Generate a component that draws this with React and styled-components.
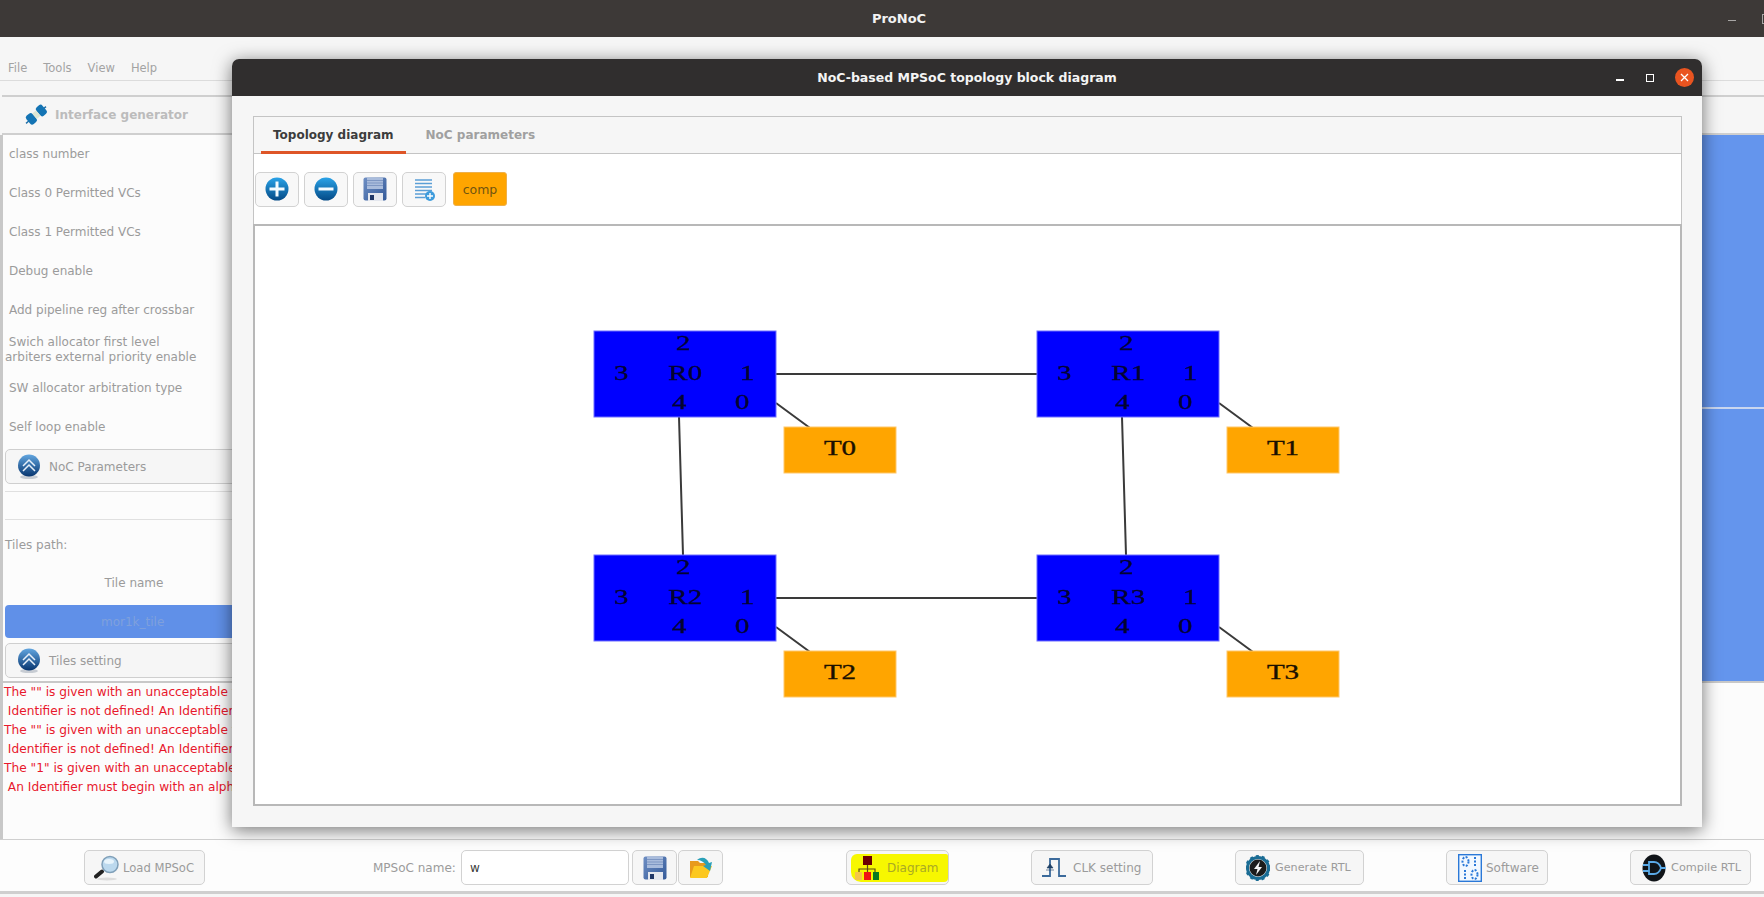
import React from "react";
import styled, { createGlobalStyle } from "styled-components";

const GlobalStyle = createGlobalStyle`
    html, body {
        margin: 0;
        padding: 0;
        height: 100%;
        overflow: hidden;
        background: #f6f6f6;
    }
    * {
        box-sizing: border-box;
    }
`

const Screen = styled.div`
    position: relative;
    width: 1764px;
    height: 897px;
    display: flex;
    flex-direction: column;
    overflow: hidden;
    background: #f6f6f6;
    font-family: "DejaVu Sans", sans-serif;
    font-size: 12px;
    color: #9b9b9b;
`

const TitleBar = styled.div`
    position: relative;
    height: 37px;
    flex: none;
    display: flex;
    align-items: center;
    justify-content: center;
    padding-left: 34px;
    background: #3d3937;
    color: #f2f2f2;
    font-weight: bold;
    font-size: 13px;
`

const MainControls = styled.div`
    position: absolute;
    top: 14px;
    left: 1728px;
    display: flex;
    align-items: center;
    gap: 26px;
`

const MainMinimize = styled.span`
    width: 8px;
    height: 1px;
    margin-top: 2px;
    background: #a8a6a5;
`

const MainMaximize = styled.span`
    width: 10px;
    height: 10px;
    border: 1px solid #a8a6a5;
`

const MenuBar = styled.div`
    height: 44px;
    flex: none;
    display: flex;
    align-items: flex-end;
    gap: 16px;
    padding: 0 0 5px 8px;
    border-bottom: 1px solid #dcdcdc;
    font-size: 11.5px;
    color: #a3a3a3;
`

const TabStrip = styled.div`
    height: 40px;
    flex: none;
    margin: 14px 0 0 2px;
    display: flex;
    align-items: center;
    padding-left: 22px;
    gap: 7px;
    border-top: 2px solid #cfcfcf;
    border-bottom: 2px solid #cfcfcf;
    font-weight: bold;
    font-size: 12px;
    color: #bcbcbc;
`

const NextTabEdge = styled.span`
    margin-left: 41px;
    width: 3px;
    height: 8px;
    background: repeating-linear-gradient(#555 0 1px, transparent 1px 3px);
`

const Upper = styled.div`
    height: 548px;
    flex: none;
    display: flex;
    border-left: 3px solid #c8c8c8;
    border-bottom: 2px solid #c8c8c8;
    background: #fcfcfc;
`

const LeftColumn = styled.div`
    width: 500px;
    flex: none;
    display: flex;
    flex-direction: column;
    padding: 0 0 0 2px;
`

const ParamRow = styled.div`
    height: 39px;
    flex: none;
    display: flex;
    align-items: center;
    padding-left: ${(p) => (p.$flush ? 0 : 4)}px;
    line-height: 15px;
    white-space: pre;
`

const Collapse = styled.div`
    height: 35px;
    flex: none;
    margin-top: ${(p) => p.$top || 0}px;
    display: flex;
    align-items: center;
    gap: 8px;
    padding-left: 11px;
    background: #f6f6f6;
    border: 1px solid #cfcfcf;
    border-radius: 5px;
`

const Divider = styled.div`
    height: 1px;
    flex: none;
    margin-top: ${(p) => p.$top}px;
    background: #e0e0e0;
`

const PathRow = styled.div`
    height: 20px;
    flex: none;
    margin-top: 15px;
    display: flex;
    align-items: center;
`

const TileHead = styled.div`
    height: 20px;
    width: 258px;
    flex: none;
    margin-top: 18px;
    display: flex;
    align-items: center;
    justify-content: center;
`

const TileBar = styled.div`
    height: 33px;
    flex: none;
    margin: 12px 0 5px 0;
    display: flex;
    align-items: center;
    padding-left: 96px;
    border-radius: 4px;
    background: #6090e8;
    color: #7fa0dc;
`

const RightColumn = styled.div`
    flex: 1;
    display: flex;
    flex-direction: column;
`

const BluePane = styled.div`
    flex: ${(p) => (p.$tall ? 1 : "none")};
    height: ${(p) => (p.$tall ? "auto" : "272px")};
    background: #6495ed;
`

const PaneSplit = styled.div`
    height: 2px;
    flex: none;
    background: #c9d6ef;
`

const ErrorLog = styled.div`
    flex: 1;
    min-height: 0;
    padding: 0 0 0 1px;
    border-left: 3px solid #c8c8c8;
    background: #fcfcfc;
    color: #e8182c;
    font-size: 12.2px;
    line-height: 19px;
    white-space: pre;
`

const BottomBar = styled.div`
    height: 55px;
    flex: none;
    margin-bottom: 3px;
    display: flex;
    align-items: center;
    padding-top: 4px;
    background: #fdfdfd;
    border-top: 1px solid #cfcfcf;
    border-bottom: 3px solid #cfcfcf;
`

const BarButton = styled.div`
    width: ${(p) => p.$width}px;
    height: 35px;
    flex: none;
    margin-left: ${(p) => p.$left || 0}px;
    display: flex;
    align-items: center;
    justify-content: ${(p) => (p.$center ? "center" : "flex-start")};
    gap: ${(p) => (p.$gap === undefined ? 5 : p.$gap)}px;
    padding-left: ${(p) => (p.$center ? 0 : p.$pad || 7)}px;
    background: #f6f6f6;
    border: 1px solid #d2d2d2;
    border-radius: 5px;
    white-space: nowrap;
    font-size: ${(p) => p.$size || 12}px;
`

const Highlight = styled.div`
    flex: 1;
    height: 28px;
    margin: 0 0 0 3px;
    display: flex;
    align-items: center;
    gap: 8px;
    padding-left: 4px;
    background: #f7f700;
    border-radius: 6px 2px 4px 10px;
    color: #a9a925;
`

const NameLabel = styled.span`
    width: 88px;
    flex: none;
    margin-left: 168px;
`

const NameInput = styled.div`
    width: 168px;
    height: 35px;
    flex: none;
    margin-right: 3px;
    display: flex;
    align-items: center;
    padding-left: 8px;
    background: #fff;
    border: 1px solid #d2d2d2;
    border-radius: 5px;
    color: #3c3c3c;
`

const Dialog = styled.div`
    position: absolute;
    left: 232px;
    top: 59px;
    width: 1470px;
    height: 768px;
    display: flex;
    flex-direction: column;
    background: #f6f6f6;
    border-radius: 7px 7px 0 0;
    box-shadow: 0 3px 18px rgba(0, 0, 0, 0.55);
`

const DialogTitle = styled.div`
    position: relative;
    height: 37px;
    flex: none;
    display: flex;
    align-items: center;
    justify-content: center;
    background: #302e2e;
    border-radius: 7px 7px 0 0;
    color: #f4f4f4;
    font-weight: bold;
    font-size: 12.5px;
`

const DialogControls = styled.div`
    position: absolute;
    right: 8px;
    top: 0;
    height: 100%;
    display: flex;
    align-items: center;
`

const DialogMinimize = styled.span`
    width: 8px;
    height: 2px;
    margin: 4px 22px 0 0;
    background: #fff;
`

const DialogMaximize = styled.span`
    width: 8px;
    height: 8px;
    margin-right: 21px;
    border: 1px solid #fff;
`

const DialogClose = styled.span`
    width: 19px;
    height: 19px;
    display: flex;
    align-items: center;
    justify-content: center;
    border-radius: 50%;
    background: #e95420;
`

const DialogBody = styled.div`
    flex: 1;
    min-height: 0;
    display: flex;
    padding: 20px 20px 21px 21px;
`

const Notebook = styled.div`
    flex: 1;
    display: flex;
    flex-direction: column;
    border-top: 1px solid #c4c4c4;
    border-left: 1px solid #c4c4c4;
    border-right: 1px solid #c4c4c4;
    background: #fff;
`

const NotebookTabs = styled.div`
    height: 37px;
    flex: none;
    display: flex;
    padding-left: 7px;
    background: #f6f6f6;
    border-bottom: 1px solid #c4c4c4;
`

const NotebookTab = styled.div`
    height: 37px;
    display: flex;
    align-items: center;
    padding: 0 12px;
    margin-right: 8px;
    font-weight: bold;
    font-size: 12px;
    color: ${(p) => (p.$active ? "#3c3c3c" : "#a0a0a0")};
    border-bottom: ${(p) => (p.$active ? "3px solid #de5527" : "3px solid transparent")};
    padding-top: 1px;
`

const ToolRow = styled.div`
    height: 70px;
    flex: none;
    display: flex;
    align-items: center;
    gap: 5px;
    padding: 0 0 0 1px;
`

const ToolButton = styled.div`
    width: 44px;
    height: 35px;
    display: flex;
    align-items: center;
    justify-content: center;
    background: #f8f8f8;
    border: 1px solid #d2d2d2;
    border-radius: 5px;
`

const CompButton = styled.div`
    width: 54px;
    height: 34px;
    margin-left: 2px;
    display: flex;
    align-items: center;
    justify-content: center;
    background: #ffa500;
    border: 1px solid #eeb04a;
    border-radius: 3px;
    color: #6f5410;
    font-size: 12.5px;
`

const Canvas = styled.div`
    flex: 1;
    min-height: 0;
    margin: 0 -1px 0 -1px;
    border: 2px solid #b8b8b8;
    background: #fff;
`

const DiagramSvg = styled.svg`
    display: block;
    width: 100%;
    height: 100%;
    font-family: "Liberation Serif", serif;
    font-size: 20px;
`

const Blur = styled.g`
    filter: blur(0.4px);
`

function PlusIcon() {
    return (
        <svg width="24" height="24" viewBox="0 0 24 24">
            <defs>
                <linearGradient id="plusFill" x1="0" y1="0" x2="0" y2="1">
                    <stop offset="0" stopColor="#2aa3e8" />
                    <stop offset="1" stopColor="#044a86" />
                </linearGradient>
            </defs>
            <circle cx="12" cy="12" r="11.5" fill="url(#plusFill)" />
            <path d="M12 4.5v15M4.5 12h15" stroke="#f4fbff" strokeWidth="3" />
        </svg>
    );
}

function MinusIcon() {
    return (
        <svg width="24" height="24" viewBox="0 0 24 24">
            <defs>
                <linearGradient id="minusFill" x1="0" y1="0" x2="0" y2="1">
                    <stop offset="0" stopColor="#2aa3e8" />
                    <stop offset="1" stopColor="#044a86" />
                </linearGradient>
            </defs>
            <circle cx="12" cy="12" r="11.5" fill="url(#minusFill)" />
            <path d="M4.5 12h15" stroke="#f4fbff" strokeWidth="3" />
        </svg>
    );
}

function SaveIcon({ id }) {
    return (
        <svg width="24" height="24" viewBox="0 0 24 24">
            <defs>
                <linearGradient id={id} x1="0" y1="0" x2="1" y2="1">
                    <stop offset="0" stopColor="#6f8fc4" />
                    <stop offset="1" stopColor="#345a99" />
                </linearGradient>
            </defs>
            <rect x="0.5" y="0.5" width="23" height="23" rx="2" fill={`url(#${id})`} />
            <rect x="4" y="1" width="16" height="11" fill="#a9bcdc" />
            <path d="M4 3.5h16M4 6h16M4 8.5h16" stroke="#7e97c3" strokeWidth="1" />
            <rect x="5" y="16" width="15" height="8" fill="#e4e7ee" />
            <rect x="7" y="18" width="4" height="5" fill="#1f3666" />
        </svg>
    );
}

function ListAddIcon() {
    return (
        <svg width="24" height="24" viewBox="0 0 24 24">
            <path d="M3 3h17M3 6.5h17M3 10h17M3 13.5h17M3 17h12M3 20.5h10" stroke="#5b9fd6" strokeWidth="1.7" />
            <circle cx="18" cy="19" r="5" fill="#3f9cdc" />
            <path d="M18 16v6M15 19h6" stroke="#fff" strokeWidth="1.4" />
        </svg>
    );
}

function PlugIcon() {
    return (
        <svg width="24" height="24" viewBox="0 0 24 24">
            <g transform="rotate(-40 12 12)">
                <rect x="-1" y="11.3" width="4" height="1.4" fill="#1f6fa8" />
                <rect x="21" y="11.3" width="4" height="1.4" fill="#1f6fa8" />
                <rect x="2" y="6.5" width="8" height="11" rx="2.5" fill="#1474b4" />
                <rect x="15" y="6.5" width="8" height="11" rx="2.5" fill="#1474b4" />
                <rect x="10" y="8.5" width="5" height="7" fill="#dde6d4" />
            </g>
        </svg>
    );
}

function ChevronIcon({ id }) {
    return (
        <svg width="24" height="25" viewBox="0 0 24 25">
            <defs>
                <linearGradient id={id} x1="0" y1="0" x2="0" y2="1">
                    <stop offset="0" stopColor="#62a6e0" />
                    <stop offset="1" stopColor="#07356f" />
                </linearGradient>
            </defs>
            <ellipse cx="12" cy="23" rx="9" ry="2" fill="#c7ccd3" />
            <circle cx="12" cy="11.5" r="11" fill={`url(#${id})`} />
            <path d="M6 12l6-6 6 6M6 17l6-6 6 6" fill="none" stroke="#e7f0fa" strokeWidth="1.5" />
        </svg>
    );
}

function LoupeIcon() {
    return (
        <svg width="26" height="26" viewBox="0 0 26 26">
            <ellipse cx="13" cy="24" rx="10" ry="1.5" fill="#dcdcdc" />
            <path d="M2 21.5l6-5" stroke="#222" strokeWidth="4" strokeLinecap="round" />
            <circle cx="16" cy="9.5" r="8" fill="#bcd9ee" stroke="#7f9fb8" strokeWidth="1.5" />
            <ellipse cx="15" cy="6.5" rx="5" ry="2.5" fill="#e9f5fc" />
        </svg>
    );
}

function FolderIcon() {
    return (
        <svg width="26" height="26" viewBox="0 0 26 26">
            <path d="M2 6h8l2 2h8v14H2z" fill="#e89a1c" />
            <path d="M2 23l4-12h18l-5 12z" fill="#fcc820" />
            <path d="M9 5c5-4 10-2 12 3l3-1-2 9-7-5 3-1c-2-3-5-5-9-5z" fill="#2aa0b8" />
        </svg>
    );
}

function HierarchyIcon() {
    return (
        <svg width="24" height="26" viewBox="0 0 24 26">
            <rect x="8" y="1" width="9" height="9" fill="#6b0000" />
            <path d="M12.5 10v4M4 17v-3h16v3M12.5 14v3" fill="none" stroke="#5b4a1a" strokeWidth="1.2" />
            <rect x="0" y="17" width="7" height="8" fill="#f5c54a" />
            <rect x="9" y="17" width="7" height="8" fill="#f01414" />
            <rect x="18" y="17" width="6" height="8" fill="#0a7a20" />
        </svg>
    );
}

function ClockIcon() {
    return (
        <svg width="26" height="24" viewBox="0 0 26 24">
            <path d="M1 20h8V3h9v17h7" fill="none" stroke="#3b6a9b" strokeWidth="1.8" />
            <path d="M9 8l-3 4h6zM5 14h8" fill="#1f3f64" stroke="#1f3f64" strokeWidth="0.6" />
        </svg>
    );
}

function GearBoltIcon() {
    return (
        <svg width="24" height="26" viewBox="0 0 24 26">
            <circle cx="12" cy="13" r="10.5" fill="none" stroke="#1a6c94" strokeWidth="3" />
            <circle cx="12" cy="13" r="12" fill="none" stroke="#1a6c94" strokeWidth="2" strokeDasharray="3 3" />
            <circle cx="12" cy="13" r="8.5" fill="#1c1c1c" />
            <path d="M14 6l-6 8h3.5l-1.5 6 6-8h-3.5z" fill="#f5f5f5" />
        </svg>
    );
}

function BinaryIcon() {
    return (
        <svg width="24" height="28" viewBox="0 0 24 28">
            <rect x="0.7" y="0.7" width="22.6" height="26.6" fill="#f2f8ff" stroke="#2a78d8" strokeWidth="1.4" />
            <g fill="none" stroke="#2a78d8" strokeWidth="2" strokeDasharray="2 1.5">
                <ellipse cx="7.5" cy="7.5" rx="3" ry="4.5" />
                <path d="M17 3v9" />
                <path d="M7 16v9" />
                <ellipse cx="16.5" cy="20.5" rx="3" ry="4.5" />
            </g>
        </svg>
    );
}

function CompileIcon() {
    return (
        <svg width="24" height="28" viewBox="0 0 24 28">
            <ellipse cx="12" cy="14" rx="11.5" ry="13.5" fill="#101418" />
            <path d="M7 8h5c4 0 6 3 7 6-1 3-3 6-7 6H7zM1 11h6M1 17h6M19 14h5" fill="none" stroke="#5aa9e6" strokeWidth="1.8" />
        </svg>
    );
}

const ROUTER_W = 182;
const ROUTER_H = 86;

function WideText({ x, y, fill, children }) {
    return (
        <text
            transform={`translate(${x} ${y}) scale(1.45 1)`}
            textAnchor="middle"
            fill={fill}
            stroke={fill}
            strokeWidth="0.35"
        >
            {children}
        </text>
    );
}

function Router({ x, y, name }) {
    return (
        <g>
            <rect x={x} y={y} width={ROUTER_W} height={ROUTER_H} fill="#0000ff" stroke="#6f6fff" strokeWidth="1" />
            <WideText x={x + 89} y={y + 19} fill="#040430">2</WideText>
            <WideText x={x + 27} y={y + 49} fill="#040430">3</WideText>
            <WideText x={x + 91} y={y + 49} fill="#040430">{name}</WideText>
            <WideText x={x + 153} y={y + 49} fill="#040430">1</WideText>
            <WideText x={x + 85} y={y + 78} fill="#040430">4</WideText>
            <WideText x={x + 148} y={y + 78} fill="#040430">0</WideText>
        </g>
    );
}

function TileNode({ x, y, name }) {
    return (
        <g>
            <rect x={x} y={y} width="112" height="46" fill="#ffa500" stroke="#ffc76a" strokeWidth="1" />
            <WideText x={x + 56} y={y + 28} fill="#1a1000">{name}</WideText>
        </g>
    );
}

const nodes = [
    { x: 594, y: 331, r: "R0", t: "T0" },
    { x: 1037, y: 331, r: "R1", t: "T1" },
    { x: 594, y: 555, r: "R2", t: "T2" },
    { x: 1037, y: 555, r: "R3", t: "T3" },
];

const params = [
    { text: "class number" },
    { text: "Class 0 Permitted VCs" },
    { text: "Class 1 Permitted VCs" },
    { text: "Debug enable" },
    { text: "Add pipeline reg after crossbar" },
    { text: " Swich allocator first level\narbiters external priority enable", flush: true },
    { text: "SW allocator arbitration type" },
    { text: "Self loop enable" },
];

const errors = [
    'The "" is given with an unacceptable value',
    ' Identifier is not defined! An Identifier must begin with an alphabet',
    'The "" is given with an unacceptable value',
    ' Identifier is not defined! An Identifier must begin with an alphabet',
    'The "1" is given with an unacceptable value',
    ' An Identifier must begin with an alphabet',
];

export default function App() {
    return (
        <Screen>
            <GlobalStyle />
            <TitleBar>
                ProNoC
                <MainControls>
                    <MainMinimize />
                    <MainMaximize />
                </MainControls>
            </TitleBar>
            <MenuBar>
                <span>File</span>
                <span>Tools</span>
                <span>View</span>
                <span>Help</span>
            </MenuBar>
            <TabStrip>
                <PlugIcon />
                <span>Interface generator</span>
                <NextTabEdge />
            </TabStrip>
            <Upper>
                <LeftColumn>
                    {params.map((p) => <ParamRow key={p.text} $flush={p.flush}>{p.text}</ParamRow>)}
                    <Collapse $top={2}>
                        <ChevronIcon id="chevNoc" />
                        <span>NoC Parameters</span>
                    </Collapse>
                    <Divider $top={7} />
                    <Divider $top={27} />
                    <PathRow>Tiles path:</PathRow>
                    <TileHead>Tile name</TileHead>
                    <TileBar>mor1k_tile</TileBar>
                    <Collapse>
                        <ChevronIcon id="chevTiles" />
                        <span>Tiles setting</span>
                    </Collapse>
                </LeftColumn>
                <RightColumn>
                    <BluePane />
                    <PaneSplit />
                    <BluePane $tall />
                </RightColumn>
            </Upper>
            <ErrorLog>
                {errors.map((e, i) => <div key={i}>{e}</div>)}
            </ErrorLog>
            <BottomBar>
                <BarButton $left={84} $width={121} $pad={9} $gap={3} $size={11.6}>
                    <LoupeIcon />
                    <span>Load MPSoC</span>
                </BarButton>
                <NameLabel>MPSoC name:</NameLabel>
                <NameInput>w</NameInput>
                <BarButton $width={45} $center>
                    <SaveIcon id="saveBar" />
                </BarButton>
                <BarButton $left={1} $width={45} $center>
                    <FolderIcon />
                </BarButton>
                <BarButton $left={123} $width={103} $pad={1} $gap={0}>
                    <Highlight>
                        <HierarchyIcon />
                        <span>Diagram</span>
                    </Highlight>
                </BarButton>
                <BarButton $left={82} $width={122} $pad={9} $gap={6}>
                    <ClockIcon />
                    <span>CLK setting</span>
                </BarButton>
                <BarButton $left={82} $width={129} $pad={10} $gap={5} $size={11.2}>
                    <GearBoltIcon />
                    <span>Generate RTL</span>
                </BarButton>
                <BarButton $left={82} $width={102} $pad={11} $gap={4}>
                    <BinaryIcon />
                    <span>Software</span>
                </BarButton>
                <BarButton $left={82} $width={121} $pad={11} $gap={5} $size={11.3}>
                    <CompileIcon />
                    <span>Compile RTL</span>
                </BarButton>
            </BottomBar>

            <Dialog>
                <DialogTitle>
                    NoC-based MPSoC topology block diagram
                    <DialogControls>
                        <DialogMinimize />
                        <DialogMaximize />
                        <DialogClose>
                            <svg width="9" height="9" viewBox="0 0 9 9">
                                <path d="M1 1l7 7M8 1l-7 7" stroke="#fff" strokeWidth="1.3" />
                            </svg>
                        </DialogClose>
                    </DialogControls>
                </DialogTitle>
                <DialogBody>
                    <Notebook>
                        <NotebookTabs>
                            <NotebookTab $active>Topology diagram</NotebookTab>
                            <NotebookTab>NoC parameters</NotebookTab>
                        </NotebookTabs>
                        <ToolRow>
                            <ToolButton><PlusIcon /></ToolButton>
                            <ToolButton><MinusIcon /></ToolButton>
                            <ToolButton><SaveIcon id="saveTool" /></ToolButton>
                            <ToolButton><ListAddIcon /></ToolButton>
                            <CompButton>comp</CompButton>
                        </ToolRow>
                        <Canvas>
                            <DiagramSvg viewBox="255 226 1425 578" preserveAspectRatio="xMinYMin meet">
                                <g stroke="#3a3a3a" strokeWidth="2" fill="none">
                                    <path d="M776 374H1037M776 598H1037" />
                                    <path d="M679 417L683 555M1122 417L1126 555" />
                                    <path d="M776 403L810 428M1219 403L1253 428M776 627L810 652M1219 627L1253 652" />
                                </g>
                                <Blur>
                                    {nodes.map((n) => (
                                        <g key={n.r}>
                                            <Router x={n.x} y={n.y} name={n.r} />
                                            <TileNode x={n.x + 190} y={n.y + 96} name={n.t} />
                                        </g>
                                    ))}
                                </Blur>
                            </DiagramSvg>
                        </Canvas>
                    </Notebook>
                </DialogBody>
            </Dialog>
        </Screen>
    );
}
